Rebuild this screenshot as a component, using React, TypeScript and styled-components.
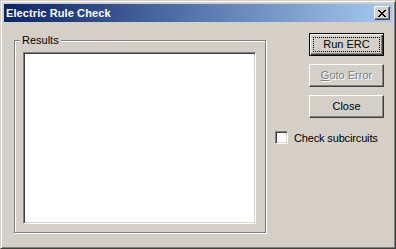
import styled, { createGlobalStyle } from "styled-components"

const Global = createGlobalStyle`
  html, body {
    margin: 0;
    padding: 0;
    background: #d4d0c8;
  }
  * {
    box-sizing: border-box;
  }
`

const Dialog = styled.div`
  width: 396px;
  height: 249px;
  background: #d4d0c8;
  border: 1px solid;
  border-color: #d4d0c8 #404040 #404040 #d4d0c8;
  box-shadow: inset 1px 1px 0 #ffffff, inset -1px -1px 0 #808080;
  padding: 3px;
  display: flex;
  flex-direction: column;
  font-family: "Liberation Sans", Arial, sans-serif;
  font-size: 11px;
  color: #000000;
`

const TitleBar = styled.div`
  height: 18px;
  flex: none;
  display: flex;
  align-items: center;
  justify-content: space-between;
  padding: 0 2px 0 2px;
  background: linear-gradient(to right, #0a246a, #a6caf0);
`

const Title = styled.span`
  color: #ffffff;
  font-weight: bold;
  font-size: 11px;
  letter-spacing: 0.1px;
`

const CloseBox = styled.div`
  width: 16px;
  height: 14px;
  background: #d4d0c8;
  border: 1px solid;
  border-color: #ffffff #404040 #404040 #ffffff;
  box-shadow: inset -1px -1px 0 #808080;
  display: flex;
  align-items: center;
  justify-content: center;
`

const Body = styled.div`
  flex: 1;
  display: flex;
  padding: 11px 0 0 10px;
`

const GroupBox = styled.div`
  position: relative;
  margin-top: 7px;
  width: 252px;
  height: 193px;
  border: 1px solid #808080;
  box-shadow: 1px 1px 0 #ffffff, inset 1px 1px 0 #ffffff;
  padding: 11px 0 0 8px;
`

const Legend = styled.span`
  position: absolute;
  top: -8px;
  left: 5px;
  padding: 0 2px;
  background: #d4d0c8;
  line-height: 14px;
`

const ListBox = styled.div`
  width: 233px;
  height: 172px;
  background: #ffffff;
  border: 1px solid;
  border-color: #808080 #ffffff #ffffff #808080;
  box-shadow: inset 1px 1px 0 #404040, inset -1px -1px 0 #d4d0c8;
`

const Side = styled.div`
  margin-left: 9px;
  width: 109px;
  display: flex;
  flex-direction: column;
  align-items: flex-end;
  gap: 8px;
`

const Button = styled.div<{ $default?: boolean; $disabled?: boolean }>`
  position: relative;
  width: 75px;
  height: 23px;
  display: flex;
  align-items: center;
  justify-content: center;
  background: #d4d0c8;
  border: 1px solid;
  border-color: ${(p) => (p.$default ? "#000000" : "#ffffff #404040 #404040 #ffffff")};
  box-shadow: ${(p) =>
    p.$default
      ? "inset 1px 1px 0 #ffffff, inset -1px -1px 0 #404040, inset -2px -2px 0 #808080"
      : "inset -1px -1px 0 #808080"};
  color: ${(p) => (p.$disabled ? "#808080" : "#000000")};
  text-shadow: ${(p) => (p.$disabled ? "1px 1px 0 #ffffff" : "none")};
  padding-bottom: 1px;
`

const Focus = styled.div`
  position: absolute;
  inset: 3px;
  border: 1px dotted #000000;
`

const Label = styled.span`
  position: relative;
`

const CheckRow = styled.label`
  margin-top: 5px;
  align-self: flex-start;
  display: flex;
  align-items: center;
  gap: 6px;
  letter-spacing: -0.15px;
`

const CheckBox = styled.span`
  width: 13px;
  height: 13px;
  background: #ffffff;
  border: 1px solid;
  border-color: #808080 #ffffff #ffffff #808080;
  box-shadow: inset 1px 1px 0 #404040, inset -1px -1px 0 #d4d0c8;
`

export default function App() {
  return (
    <>
      <Global />
      <Dialog>
        <TitleBar>
          <Title>Electric Rule Check</Title>
          <CloseBox>
            <svg width="8" height="7" viewBox="0 0 8 7" shapeRendering="crispEdges">
              <path
                d="M0 0h2v1H0zM6 0h2v1H6zM1 1h2v1H1zM5 1h2v1H5zM2 2h4v1H2zM3 3h2v1H3zM2 4h4v1H2zM1 5h2v1H1zM5 5h2v1H5zM0 6h2v1H0zM6 6h2v1H6z"
                fill="#000000"
              />
            </svg>
          </CloseBox>
        </TitleBar>
        <Body>
          <GroupBox>
            <Legend>Results</Legend>
            <ListBox />
          </GroupBox>
          <Side>
            <Button $default>
              <Focus />
              <Label>Run ERC</Label>
            </Button>
            <Button $disabled>
              <Label>
                <u>G</u>oto Error
              </Label>
            </Button>
            <Button>
              <Label>Close</Label>
            </Button>
            <CheckRow>
              <CheckBox />
              <span>Check subcircuits</span>
            </CheckRow>
          </Side>
        </Body>
      </Dialog>
    </>
  )
}
